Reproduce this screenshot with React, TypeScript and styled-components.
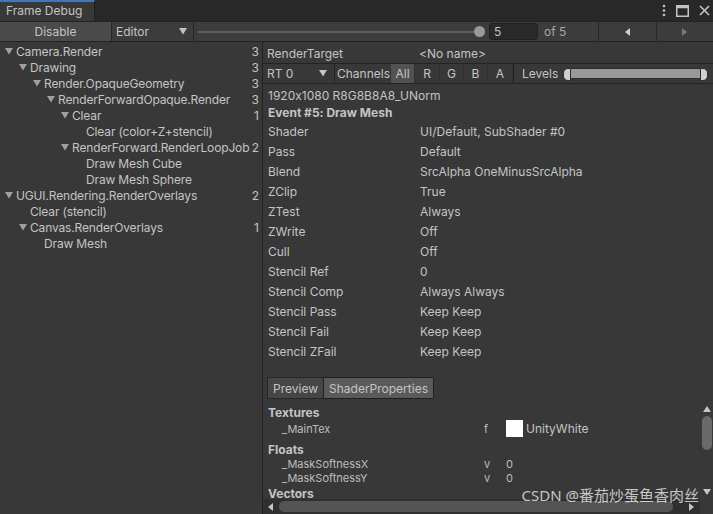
import styled, { createGlobalStyle, css } from 'styled-components';

const GlobalStyle = createGlobalStyle`
  html, body {
    margin: 0;
    padding: 0;
    background: #383838;
  }
  body {
    font-family: Inter, "Noto Sans", sans-serif;
    font-size: 12px;
    color: #c4c4c4;
    font-feature-settings: "calt" 0;
  }
  * { box-sizing: border-box; }
`;

type TreeNode = {
  depth: number;
  label: string;
  count?: number;
  open?: boolean;
};

const tree: TreeNode[] = [
  { depth: 0, label: 'Camera.Render', count: 3, open: true },
  { depth: 1, label: 'Drawing', count: 3, open: true },
  { depth: 2, label: 'Render.OpaqueGeometry', count: 3, open: true },
  { depth: 3, label: 'RenderForwardOpaque.Render', count: 3, open: true },
  { depth: 4, label: 'Clear', count: 1, open: true },
  { depth: 5, label: 'Clear (color+Z+stencil)' },
  { depth: 4, label: 'RenderForward.RenderLoopJob', count: 2, open: true },
  { depth: 5, label: 'Draw Mesh Cube' },
  { depth: 5, label: 'Draw Mesh Sphere' },
  { depth: 0, label: 'UGUI.Rendering.RenderOverlays', count: 2, open: true },
  { depth: 1, label: 'Clear (stencil)' },
  { depth: 1, label: 'Canvas.RenderOverlays', count: 1, open: true },
  { depth: 2, label: 'Draw Mesh' },
];

const props: [string, string][] = [
  ['Shader', 'UI/Default, SubShader #0'],
  ['Pass', 'Default'],
  ['Blend', 'SrcAlpha OneMinusSrcAlpha'],
  ['ZClip', 'True'],
  ['ZTest', 'Always'],
  ['ZWrite', 'Off'],
  ['Cull', 'Off'],
  ['Stencil Ref', '0'],
  ['Stencil Comp', 'Always Always'],
  ['Stencil Pass', 'Keep Keep'],
  ['Stencil Fail', 'Keep Keep'],
  ['Stencil ZFail', 'Keep Keep'],
];

const channels = [
  { label: 'All', w: 24, on: true },
  { label: 'R', w: 25 },
  { label: 'G', w: 24 },
  { label: 'B', w: 24 },
  { label: 'A', w: 25 },
];

const Down = ({ color = '#a0a0a0' }: { color?: string }) => (
  <svg width="8" height="7" viewBox="0 0 8 7">
    <polygon points="0,0 8,0 4,6.5" fill={color} />
  </svg>
);

const App = () => {
  return (
    <>
      <GlobalStyle />
      <Window>
        <TitleBar>
          <WinTab>Frame Debug</WinTab>
          <WinIcons>
            <svg width="4" height="13" viewBox="0 0 4 13">
              <circle cx="2" cy="2" r="1.3" fill="#c4c4c4" />
              <circle cx="2" cy="6.5" r="1.3" fill="#c4c4c4" />
              <circle cx="2" cy="11" r="1.3" fill="#c4c4c4" />
            </svg>
            <svg width="13" height="12" viewBox="0 0 13 12">
              <rect x="0.75" y="0.75" width="11.5" height="10.5" fill="none" stroke="#c4c4c4" strokeWidth="1.5" />
              <rect x="0.75" y="0.75" width="11.5" height="2.5" fill="#c4c4c4" />
            </svg>
            <svg width="11" height="11" viewBox="0 0 11 11">
              <path d="M1 1 L10 10 M10 1 L1 10" stroke="#c4c4c4" strokeWidth="1.6" />
            </svg>
          </WinIcons>
        </TitleBar>

        <Toolbar>
          <DisableButton>Disable</DisableButton>
          <EditorDrop>
            <span>Editor</span>
            <Down color="#c4c4c4" />
          </EditorDrop>
          <SliderArea>
            <Track />
            <Thumb />
          </SliderArea>
          <NumField>5</NumField>
          <OfLabel>of 5</OfLabel>
          <NavButton>
            <svg width="5" height="8" viewBox="0 0 5 8">
              <polygon points="5,0 5,8 0,4" fill="#d0d0d0" />
            </svg>
          </NavButton>
          <NavButton>
            <svg width="5" height="8" viewBox="0 0 5 8">
              <polygon points="0,0 0,8 5,4" fill="#7a7a7a" />
            </svg>
          </NavButton>
        </Toolbar>

        <Body>
          <TreePane>
            {tree.map((n, i) => (
              <TreeRow key={i} depth={n.depth}>
                <Arrow>{n.open && <Down />}</Arrow>
                <TreeLabel>{n.label}</TreeLabel>
                {n.count !== undefined && <Count>{n.count}</Count>}
              </TreeRow>
            ))}
          </TreePane>

          <Detail>
            <KeyRow>
              <span>RenderTarget</span>
              <span>&lt;No name&gt;</span>
            </KeyRow>
            <ChannelBar>
              <RtDrop>
                <span>RT 0</span>
                <Down color="#c4c4c4" />
              </RtDrop>
              <ChannelsLabel>Channels</ChannelsLabel>
              {channels.map(c => (
                <ChannelButton key={c.label} w={c.w} on={c.on}>{c.label}</ChannelButton>
              ))}
              <LevelsLabel>Levels</LevelsLabel>
              <LevelsBar />
            </ChannelBar>
            <InfoLine first>1920x1080 R8G8B8A8_UNorm</InfoLine>
            <InfoLine bold>Event #5: Draw Mesh</InfoLine>
            {props.map(([k, v]) => (
              <PropRow key={k}>
                <span>{k}</span>
                <span>{v}</span>
              </PropRow>
            ))}

            <Tabs>
              <Tab>Preview</Tab>
              <Tab active>ShaderProperties</Tab>
            </Tabs>

            <ScrollView>
              <ScrollContent>
                <Section>Textures</Section>
                <ShaderItem tall>
                  <span>_MainTex</span>
                  <span>f</span>
                  <TexValue>
                    <Swatch />
                    <span>UnityWhite</span>
                  </TexValue>
                </ShaderItem>
                <Section gap>Floats</Section>
                <ShaderItem>
                  <span>_MaskSoftnessX</span>
                  <span>v</span>
                  <span>0</span>
                </ShaderItem>
                <ShaderItem>
                  <span>_MaskSoftnessY</span>
                  <span>v</span>
                  <span>0</span>
                </ShaderItem>
                <Section>Vectors</Section>
              </ScrollContent>
              <VScroll>
                <svg width="8" height="6" viewBox="0 0 8 6">
                  <polygon points="0,6 8,6 4,0" fill="#c4c4c4" />
                </svg>
                <VThumb />
                <svg width="8" height="6" viewBox="0 0 8 6">
                  <polygon points="0,0 8,0 4,6" fill="#c4c4c4" />
                </svg>
              </VScroll>
              <HScroll>
                <svg width="5" height="8" viewBox="0 0 5 8">
                  <polygon points="5,0 5,8 0,4" fill="#c4c4c4" />
                </svg>
                <HThumb />
                <svg width="5" height="8" viewBox="0 0 5 8">
                  <polygon points="0,0 0,8 5,4" fill="#c4c4c4" />
                </svg>
              </HScroll>
              <Corner />
            </ScrollView>
            <Watermark>CSDN @番茄炒蛋鱼香肉丝</Watermark>
          </Detail>
        </Body>
      </Window>
    </>
  );
};

export default App;

const Window = styled.div`
  width: 713px;
  height: 514px;
  display: flex;
  flex-direction: column;
  overflow: hidden;
  background: #383838;
`;

const TitleBar = styled.div`
  height: 21px;
  flex: none;
  display: flex;
  background: #282828;
`;

const WinTab = styled.div`
  width: 95px;
  height: 21px;
  padding-left: 6px;
  border-top: 2px solid #3a79bb;
  border-right: 1px solid #1e1e1e;
  background: #383838;
  line-height: 18px;
  font-size: 12px;
  color: #c4c4c4;
`;

const WinIcons = styled.div`
  margin-left: auto;
  display: flex;
  align-items: center;
  gap: 10px;
  padding-right: 3px;
`;

const Toolbar = styled.div`
  height: 21px;
  flex: none;
  display: flex;
  align-items: stretch;
  background: #3c3c3c;
  border-top: 1px solid #232323;
  border-bottom: 1px solid #232323;
`;

const DisableButton = styled.div`
  width: 112px;
  display: flex;
  align-items: center;
  justify-content: center;
  background: #4a4a4a;
  border-right: 1px solid #262626;
`;

const EditorDrop = styled.div`
  width: 82px;
  display: flex;
  align-items: center;
  justify-content: space-between;
  padding: 0 6px 0 4px;
  border-right: 1px solid #262626;
`;

const SliderArea = styled.div`
  width: 294px;
  position: relative;
  display: flex;
  align-items: center;
  padding-left: 4px;
`;

const Track = styled.div`
  width: 282px;
  height: 2px;
  background: #5e5e5e;
`;

const Thumb = styled.div`
  position: absolute;
  left: 280px;
  top: 4px;
  width: 11px;
  height: 11px;
  border-radius: 50%;
  background: #999999;
`;

const NumField = styled.div`
  width: 49px;
  height: 17px;
  align-self: center;
  margin-left: 1px;
  padding-left: 4px;
  line-height: 15px;
  background: #2a2a2a;
  border: 1px solid #212121;
  border-radius: 3px;
`;

const OfLabel = styled.div`
  width: 60px;
  display: flex;
  align-items: center;
  padding-left: 6px;
  color: #a6a6a6;
`;

const NavButton = styled.div`
  flex: 1;
  display: flex;
  align-items: center;
  justify-content: center;
  border-left: 1px solid #262626;
`;

const Body = styled.div`
  flex: 1;
  display: flex;
  min-height: 0;
`;

const TreePane = styled.div`
  width: 263px;
  flex: none;
  padding-top: 1px;
  border-right: 1px solid #232323;
`;

const TreeRow = styled.div<{ depth: number }>`
  height: 16px;
  display: flex;
  align-items: center;
  padding-left: ${({ depth }) => 5 + depth * 14}px;
  padding-right: 3px;
  white-space: nowrap;
`;

const Arrow = styled.span`
  width: 11px;
  flex: none;
  display: flex;
  align-items: center;
  padding-top: 1px;
`;

const TreeLabel = styled.span`
  flex: 1;
  min-width: 0;
  letter-spacing: -0.15px;
`;

const Count = styled.span`
  padding-left: 2px;
`;

const Detail = styled.div`
  flex: 1;
  min-width: 0;
  display: flex;
  flex-direction: column;
  position: relative;
  padding-top: 2px;
`;

const KeyRow = styled.div`
  height: 19px;
  display: grid;
  grid-template-columns: 152px 1fr;
  align-items: center;
  padding-left: 4px;
  white-space: nowrap;
`;

const ChannelBar = styled.div`
  height: 21px;
  display: flex;
  align-items: stretch;
  border-top: 1px solid #232323;
  border-bottom: 1px solid #232323;
  white-space: nowrap;
`;

const RtDrop = styled.div`
  width: 72px;
  display: flex;
  align-items: center;
  justify-content: space-between;
  padding: 0 7px 0 4px;
  border-right: 1px solid #232323;
`;

const ChannelsLabel = styled.div`
  width: 56px;
  display: flex;
  align-items: center;
  padding-left: 2px;
`;

const ChannelButton = styled.div<{ w: number; on?: boolean }>`
  width: ${({ w }) => w}px;
  display: flex;
  align-items: center;
  justify-content: center;
  border-right: 1px solid #303030;
  ${({ on }) => on && css`
    background: #525252;
  `}
`;

const LevelsLabel = styled.div`
  display: flex;
  align-items: center;
  padding: 0 5px 0 8px;
  border-left: 1px solid #232323;
`;

const LevelsBar = styled.div`
  width: 145px;
  height: 11px;
  align-self: center;
  position: relative;
  border-radius: 5px;
  background: #999999;
  border: 1px solid #2c2c2c;

  &::before, &::after {
    content: '';
    position: absolute;
    top: -1px;
    width: 6px;
    height: 11px;
    background: #cfcfcf;
    border: 1px solid #2c2c2c;
  }
  &::before {
    left: -1px;
    border-radius: 5px 0 0 5px;
  }
  &::after {
    right: -1px;
    border-radius: 0 5px 5px 0;
  }
`;

const InfoLine = styled.div<{ bold?: boolean; first?: boolean }>`
  height: 17px;
  display: flex;
  align-items: center;
  padding-left: 5px;
  ${({ bold }) => bold && css`
    font-weight: 700;
  `}
  ${({ first }) => first && css`
    margin-top: 3px;
  `}
`;

const PropRow = styled.div`
  height: 20px;
  display: grid;
  grid-template-columns: 152px 1fr;
  align-items: center;
  padding-left: 5px;
  white-space: nowrap;
`;

const Tabs = styled.div`
  display: flex;
  margin-top: 16px;
  padding-left: 4px;
`;

const Tab = styled.div<{ active?: boolean }>`
  height: 22px;
  display: flex;
  align-items: center;
  padding: 0 5px;
  background: #464646;
  border: 1px solid #262626;
  ${({ active }) => active && css`
    background: #5a5a5a;
    border-color: #1f1f1f;
    margin-left: -1px;
  `}
`;

const ScrollView = styled.div`
  flex: 1;
  min-height: 0;
  margin-top: 2px;
  display: grid;
  grid-template-columns: 1fr 13px;
  grid-template-rows: 1fr 15px;
`;

const ScrollContent = styled.div`
  overflow: hidden;
  padding: 3px 0 0 5px;
`;

const Section = styled.div<{ gap?: boolean }>`
  height: 16px;
  display: flex;
  align-items: center;
  font-weight: 700;
  ${({ gap }) => gap && css`
    margin-top: 5px;
  `}
`;

const ShaderItem = styled.div<{ tall?: boolean }>`
  height: ${({ tall }) => (tall ? 16 : 14)}px;
  display: grid;
  grid-template-columns: 202px 22px 1fr;
  align-items: center;
  padding-left: 14px;
  font-size: 11px;
  color: #bdbdbd;
`;

const TexValue = styled.span`
  display: flex;
  align-items: center;
  gap: 3px;
  font-size: 12px;
  color: #c4c4c4;
`;

const Swatch = styled.span`
  width: 17px;
  height: 17px;
  background: #ffffff;
`;

const VScroll = styled.div`
  display: flex;
  flex-direction: column;
  align-items: center;
  padding: 5px 0 4px;
  background: #383838;
`;

const VThumb = styled.div`
  width: 10px;
  height: 34px;
  margin: 4px 0 auto;
  border-radius: 5px;
  background: #6a6a6a;
`;

const HScroll = styled.div`
  display: flex;
  align-items: center;
  padding: 0 6px 0 5px;
  background: #2f2f2f;
  gap: 6px;
`;

const HThumb = styled.div`
  flex: 1;
  height: 11px;
  margin-right: 10px;
  border-radius: 6px;
  background: #545454;
`;

const Corner = styled.div`
  background: #383838;
`;

const Watermark = styled.div`
  position: absolute;
  right: 14px;
  bottom: 9px;
  font-family: "Noto Sans", "Noto Sans CJK SC", sans-serif;
  font-size: 15px;
  color: rgba(255, 255, 255, 0.72);
  white-space: nowrap;
`;
